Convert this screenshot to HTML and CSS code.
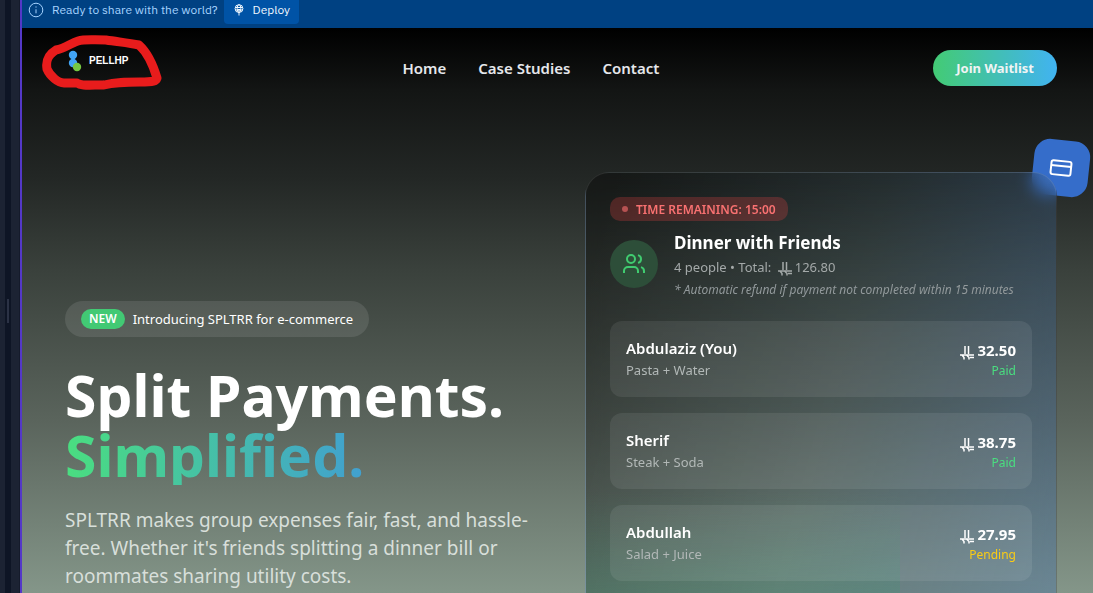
FILE: index.html
```html
<!DOCTYPE html>
<html lang="en">
<head>
<meta charset="utf-8">
<title>SPLTRR</title>
<link rel="stylesheet" href="styles.css">
</head>
<body>
<svg class="defs" aria-hidden="true">
  <symbol id="riyal" viewBox="0 0 14 14"><path d="M5 0v8M8.500 0v8M0 9h14M10 11.500h4M2 9l2 2.500v2M6.500 9l2.500 2.500v2" /></symbol>
</svg>
<div class="shell">
  <aside class="rail"><span class="grip"></span></aside>
  <div class="preview">
    <div class="deploy-bar">
      <svg class="info" viewBox="0 0 16 16"><circle cx="8" cy="8" r="6.800"/><path d="M8 7.300v4M8 4.400v1.200"/></svg>
      <span>Ready to share with the world?</span>
      <button class="deploy" type="button">
        <svg viewBox="0 0 12 12"><circle cx="6" cy="4.600" r="3.900"/><ellipse cx="6" cy="4.600" rx="1.800" ry="3.900"/><path d="M2.300 3.500h7.400M2.300 6h7.400M6 5v6.500M4.500 6.500 6 5l1.500 1.500"/></svg>
        Deploy
      </button>
    </div>
    <div class="site">
      <header class="header">
        <a class="logo" href="#" aria-label="Home page">
          <svg class="mark" viewBox="0 0 14 22"><circle cx="5" cy="5" r="4.200" fill="#42a5f5"/><circle cx="5" cy="13" r="4.200" fill="#42a5f5"/><circle cx="9" cy="17" r="4.200" fill="#76c843"/></svg>
          <span>PELLHP</span>
          <svg class="scribble" viewBox="0 0 124 58"><path d="M37 7C30 9 25 14 15 16C5 22 5 29 6 35C9 42 17 49 23 49L36 49C40 52 48 51 63 51C75 48 84 48 99 48C113 48 115 47 116 44C113 34 108 20 98 11C88 9 78 8 65 6C50 6 44 5 37 7Z"/></svg>
        </a>
        <nav class="nav"><a href="#">Home</a><a href="#">Case Studies</a><a href="#">Contact</a></nav>
        <button class="join" type="button">Join Waitlist</button>
      </header>
      <main class="hero">
        <section class="intro">
          <div class="announce"><span class="new">NEW</span><span>Introducing SPLTRR for e-commerce</span></div>
          <h1>Split Payments.<br><span class="tint">Simplified.</span></h1>
          <p class="lead">SPLTRR makes group expenses fair, fast, and hassle-free. Whether it's friends splitting a dinner bill or roommates sharing utility costs.</p>
        </section>
        <section class="demo">
          <div class="float"><svg viewBox="0 0 24 24"><rect x="2" y="5" width="20" height="14" rx="2"/><path d="M2 10h20"/></svg></div>
          <div class="card">
            <div class="timer"><i class="dot"></i>TIME REMAINING: 15:00</div>
            <div class="bill">
              <div class="avatar"><svg viewBox="0 0 24 24"><path d="M16 21v-2a4 4 0 0 0-4-4H6a4 4 0 0 0-4 4v2"/><circle cx="9" cy="7" r="4"/><path d="M22 21v-2a4 4 0 0 0-3-3.870M16 3.130a4 4 0 0 1 0 7.750"/></svg></div>
              <div>
                <h2>Dinner with Friends</h2>
                <p class="total">4 people • Total: <svg class="riyal"><use href="#riyal"/></svg>126.80</p>
                <p class="note">* Automatic refund if payment not completed within 15 minutes</p>
              </div>
            </div>
            <ul class="people">
              <li><div><h3>Abdulaziz (You)</h3><p>Pasta + Water</p></div><div class="sum"><strong><svg class="riyal"><use href="#riyal"/></svg>32.50</strong><span class="paid">Paid</span></div></li>
              <li><div><h3>Sherif</h3><p>Steak + Soda</p></div><div class="sum"><strong><svg class="riyal"><use href="#riyal"/></svg>38.75</strong><span class="paid">Paid</span></div></li>
              <li><div><h3>Abdullah</h3><p>Salad + Juice</p></div><div class="sum"><strong><svg class="riyal"><use href="#riyal"/></svg>27.95</strong><span class="pending">Pending</span></div></li>
            </ul>
          </div>
        </section>
      </main>
    </div>
  </div>
</div>
</body>
</html>
```
FILE: styles.css
```css
* { box-sizing: border-box; margin: 0; padding: 0; }
body { font-family: "Noto Sans", "Open Sans", sans-serif; font-size: 15px; color: #fff; }
a { color: inherit; text-decoration: none; }
button { border: 0; font: inherit; color: inherit; cursor: pointer; }
svg { fill: none; stroke: currentColor; flex: none; }
.defs { position: absolute; width: 0; height: 0; }
.shell { display: flex; height: 100vh; overflow: hidden; background: #1c2333; }
.rail { width: 22px; flex: none; display: flex; align-items: center; padding: 28px 0 0 7px; background: linear-gradient(to right, #1c2333 5px, #0e1525 5px 11px, #1c2333 11px 19px, #151b2b 19px 20px, #5438c8 20px); }
.grip { width: 2px; height: 24px; background: #2b3245; }
.preview { flex: 1; min-width: 0; display: flex; flex-direction: column; }
.deploy-bar { display: flex; flex: none; align-items: flex-start; height: 28px; padding-left: 6px; background: #004182; color: #a6d3ff; font: 12px/20px "IBM Plex Sans", Inter, sans-serif; }
.info { width: 16px; height: 16px; margin: 2px 8px 0 0; }
.deploy { display: flex; align-items: center; gap: 8px; height: 24px; margin-left: 6px; padding: 0 9px 4px; border-radius: 0 0 4px 4px; background: #0053a6; color: #f0f8ff; }
.deploy svg { width: 12px; height: 12px; }
.site { flex: 1; min-height: 0; padding: 0 36px 0 43px; background: linear-gradient(#000 0, #131514 62px, #232725 150px, #3a413c 242px, #5a645c 392px, #849689 565px); }
.header { display: flex; justify-content: space-between; align-items: center; height: 80px; }
.logo { position: relative; display: flex; align-items: center; gap: 7px; margin: -14px 0 0 3px; font: 900 10px/14px "Liberation Sans", sans-serif; }
.mark { width: 14px; height: 22px; stroke: none; }
.scribble { position: absolute; left: -27px; top: -16px; width: 124px; height: 58px; stroke: #e81c1c; stroke-width: 9px; stroke-linejoin: round; }
.nav { display: flex; gap: 32px; color: #e5e7eb; font-weight: 600; }
.join { height: 36px; padding: 0 23px; border-radius: 18px; background: linear-gradient(to right, #43cb74, #41b3f1); color: #f0f4f4; font-size: 13px; font-weight: 700; }
.hero { display: grid; grid-template-columns: 1fr 1fr; gap: 48px; padding-top: 64px; }
.intro { padding-top: 129px; }
.announce { display: inline-flex; align-items: center; gap: 8px; height: 36px; padding: 0 16px; border-radius: 18px; background: rgba(255,255,255,.1); font-size: 13px; }
.new { padding: 0 8px; border-radius: 10px; background: #42c974; font-size: 12px; font-weight: 600; line-height: 20px; }
h1 { margin-top: 28px; font-size: 57px; font-weight: 700; line-height: 60px; white-space: nowrap; }
.tint { display: inline-block; background: linear-gradient(to right, #4ade80, #41a0d0); background-clip: text; -webkit-background-clip: text; color: transparent; }
.lead { margin-top: 21px; font-size: 19px; line-height: 28px; color: #d8dfda; }
.demo { position: relative; }
.float { position: absolute; top: -32px; right: -32px; display: grid; place-items: center; width: 56px; height: 56px; border-radius: 16px; background: #356dca; transform: rotate(6deg); }
.float svg { width: 24px; height: 24px; stroke-width: 2px; }
.card { position: relative; height: 520px; padding: 24px; border: 1px solid rgba(255,255,255,.1); border-radius: 24px; background: linear-gradient(to top, rgba(46,150,110,.34) 18%, transparent) left bottom / 314px 200px no-repeat, linear-gradient(105deg, rgba(0,0,0,.36) 5%, rgba(40,62,75,.26) 50%, rgba(67,113,175,.38)); backdrop-filter: blur(8px); }
.timer { display: flex; width: fit-content; align-items: center; gap: 8px; height: 24px; padding: 0 12px; border-radius: 10px; background: rgba(239,68,68,.25); color: #f87171; font-size: 12px; font-weight: 600; }
.dot { width: 6px; height: 6px; border-radius: 50%; background: #b65252; }
.bill { display: flex; align-items: center; gap: 16px; margin-top: 8px; white-space: nowrap; }
.avatar { display: grid; place-items: center; width: 48px; height: 48px; flex: none; border-radius: 50%; background: #2d4e39; color: #40cc70; }
.avatar svg { width: 24px; height: 24px; stroke-width: 2px; }
h2 { font-size: 17px; font-weight: 700; line-height: 28px; }
.total { color: #a4a9a9; font-size: 13px; line-height: 20px; }
.riyal { width: 14px; height: 14px; margin: 0 3px; vertical-align: -4px; stroke-width: 1.500px; }
.note { margin-top: 4px; color: #92999b; font-size: 12px; font-style: italic; line-height: 18px; }
.people { display: grid; gap: 16px; margin-top: 22px; list-style: none; }
.people li { display: flex; justify-content: space-between; align-items: center; height: 76px; padding: 0 16px; border-radius: 12px; background: rgba(255,255,255,.08); }
h3 { font-size: 15px; font-weight: 600; line-height: 22px; }
.people p { color: #b2b8b7; font-size: 13px; line-height: 22px; }
.sum { display: grid; justify-items: end; font-size: 12px; line-height: 18px; }
.sum strong { font-size: 15px; line-height: 24px; }
.paid { color: #4ade80; }
.pending { color: #facc15; }
```
